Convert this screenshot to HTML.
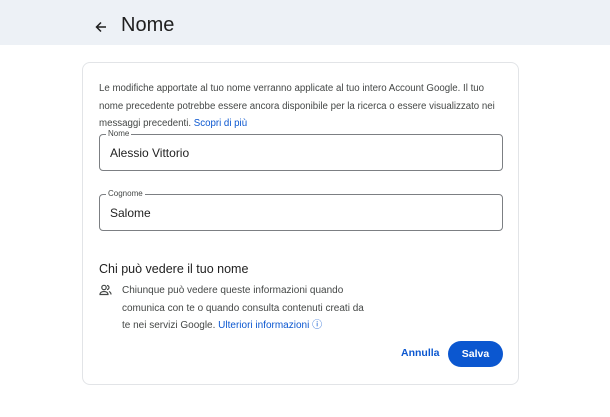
<!DOCTYPE html>
<html><head><style>
*{margin:0;padding:0;box-sizing:border-box}
body{width:610px;height:417px;background:#fff;font-family:"Liberation Sans",sans-serif;position:relative;overflow:hidden;color:#1f1f1f}
.hdr{position:absolute;left:0;top:0;width:610px;height:45px;background:#edf1f6}
.title{position:absolute;left:121px;top:14px;font-size:20px;color:#1f1f1f}
.card{position:absolute;left:82px;top:62px;width:437px;height:323px;border:1px solid #e2e4e7;border-radius:8px}
.p{position:absolute;font-size:9.7px;line-height:17.5px;color:#444746;white-space:nowrap}
a{color:#0b57d0;text-decoration:none}
.in{position:absolute;left:99px;width:404px;height:37px;border:1px solid #7c7f83;border-radius:4px}
.lab{position:absolute;left:6px;top:-6px;background:#fff;padding:0 2px;font-size:8px;color:#444746}
.val{position:absolute;left:10px;top:11px;font-size:12px;color:#1f1f1f}
.h2{position:absolute;left:99px;top:262px;font-size:12.5px;color:#1f1f1f}
.btn{position:absolute;font-size:10.5px;font-weight:bold}
</style></head><body>
<div class="hdr"></div>
<svg style="position:absolute;left:94px;top:20px" width="14" height="14" viewBox="0 0 14 14"><path d="M12 7H2.5M7 2.5L2.5 7L7 11.5" stroke="#1f1f1f" stroke-width="1.5" fill="none"/></svg>
<div class="title">Nome</div>
<div class="card"></div>
<div class="p" style="left:99px;top:80px">Le modifiche apportate al tuo nome verranno applicate al tuo intero Account Google. Il tuo<br>nome precedente potrebbe essere ancora disponibile per la ricerca o essere visualizzato nei<br>messaggi precedenti. <a>Scopri di più</a></div>
<div class="in" style="top:134px"><span class="lab">Nome</span><span class="val">Alessio Vittorio</span></div>
<div class="in" style="top:194px"><span class="lab">Cognome</span><span class="val">Salome</span></div>
<div class="h2">Chi può vedere il tuo nome</div>
<svg style="position:absolute;left:99px;top:284px" width="13" height="12" viewBox="0 0 13 12"><circle cx="5" cy="3.5" r="2.2" stroke="#444746" stroke-width="1.2" fill="none"/><path d="M1 10.5c0-2 2-3 4-3s4 1 4 3z" stroke="#444746" stroke-width="1.2" fill="none"/><path d="M8 1.5a2 2 0 010 4M10 7.5c1.2.5 2 1.5 2 3" stroke="#444746" stroke-width="1.2" fill="none"/></svg>
<div class="p" style="left:122px;top:282px;font-size:10px">Chiunque può vedere queste informazioni quando<br>comunica con te o quando consulta contenuti creati da<br>te nei servizi Google. <a>Ulteriori informazioni ⓘ</a></div>
<div class="btn" style="left:401px;top:347px;color:#0b57d0">Annulla</div>
<div class="btn" style="left:448px;top:341px;width:55px;height:26px;background:#0b57d0;color:#fff;border-radius:13px;text-align:center;line-height:26px">Salva</div>
</body></html>
